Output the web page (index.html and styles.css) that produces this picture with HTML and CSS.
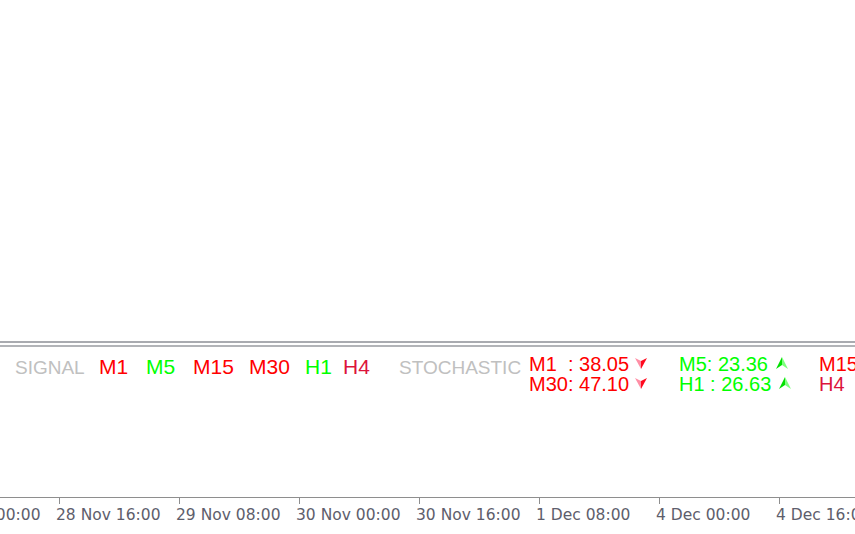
FILE: index.html
```html
<!DOCTYPE html>
<html lang="en">
<head>
  <meta charset="UTF-8">
  <title>Chart - Signal / Stochastic</title>
  <link rel="stylesheet" href="styles.css">
</head>
<body>

  <div class="chart"></div>

  <div class="separator"></div>

  <section class="panel">
    <span class="slot slot-signal label-muted">SIGNAL</span>
    <span class="slot tf slot-m1 red">M1</span>
    <span class="slot tf slot-m5 green">M5</span>
    <span class="slot tf slot-m15 red">M15</span>
    <span class="slot tf slot-m30 red">M30</span>
    <span class="slot tf slot-h1 green">H1</span>
    <span class="slot tf slot-h4 crimson">H4</span>
    <span class="slot slot-stoch label-muted">STOCHASTIC</span>

    <div class="stoch-col stoch-col-1">
      <div class="stoch-line red">M1  : 38.05<svg class="arrow arrow-down" width="12" height="11" viewBox="0 0 12 11"><polygon points="0,0 6,3 6,11" fill="#ff8fa6"/><polygon points="12,0 6,3 6,11" fill="#ff0a1e"/></svg></div>
      <div class="stoch-line red">M30: 47.10<svg class="arrow arrow-down" width="12" height="11" viewBox="0 0 12 11"><polygon points="0,0 6,3 6,11" fill="#ff8fa6"/><polygon points="12,0 6,3 6,11" fill="#ff0a1e"/></svg></div>
    </div>

    <div class="stoch-col stoch-col-2">
      <div class="stoch-line green">M5: 23.36<svg class="arrow arrow-up" width="12" height="12" viewBox="0 0 12 12"><polygon points="6,0 6,8 0,12" fill="#00e000"/><polygon points="6,0 6,8 12,12" fill="#7dff7d"/></svg></div>
      <div class="stoch-line green">H1 : 26.63<svg class="arrow arrow-up" width="12" height="12" viewBox="0 0 12 12"><polygon points="6,0 6,8 0,12" fill="#00e000"/><polygon points="6,0 6,8 12,12" fill="#7dff7d"/></svg></div>
    </div>

    <div class="stoch-col stoch-col-3">
      <div class="stoch-line red">M15: 41.72</div>
      <div class="stoch-line crimson">H4  : 55.08</div>
    </div>
  </section>

  <div class="axis">
    <div class="axis-cell"><span class="tick"></span><span class="axis-label">28 Nov 00:00</span></div>
    <div class="axis-cell"><span class="tick"></span><span class="axis-label">28 Nov 16:00</span></div>
    <div class="axis-cell"><span class="tick"></span><span class="axis-label">29 Nov 08:00</span></div>
    <div class="axis-cell"><span class="tick"></span><span class="axis-label">30 Nov 00:00</span></div>
    <div class="axis-cell"><span class="tick"></span><span class="axis-label">30 Nov 16:00</span></div>
    <div class="axis-cell"><span class="tick"></span><span class="axis-label">1 Dec 08:00</span></div>
    <div class="axis-cell"><span class="tick"></span><span class="axis-label">4 Dec 00:00</span></div>
    <div class="axis-cell"><span class="tick"></span><span class="axis-label">4 Dec 16:00</span></div>
  </div>

</body>
</html>
```

FILE: styles.css
```css
* { margin: 0; padding: 0; box-sizing: border-box; }
html, body { width: 855px; height: 534px; overflow: hidden; }
body { background: #fff; font-family: "Liberation Sans", Arial, sans-serif; }

.chart { height: 341px; }
.separator {
  height: 6px; border-top: 2px solid #a9abb0; border-bottom: 2px solid #b2b4b8;
}

/* indicator window */
.panel {
  height: 150px; display: flex; align-items: flex-start;
  padding: 7px 0 0 15px; white-space: nowrap; overflow: hidden;
  font-size: 19px;
}
.slot { flex: none; margin-top: 4px; line-height: 20px; }
.tf { font-size: 21px; margin-top: 3px; }
.slot-signal { width: 84px; }
.slot-m1, .slot-m5 { width: 47px; }
.slot-m15, .slot-m30 { width: 56px; }
.slot-h1 { width: 38px; }
.slot-h4 { width: 56px; }
.slot-stoch { width: 130px; }

.label-muted { color: #c0c0c0; }
.red { color: #ff0000; }
.green { color: #00ff00; }
.crimson { color: #dc143c; }

.stoch-col { flex: none; font-size: 20px; }
.stoch-col-1 { width: 150px; }
.stoch-col-2 { width: 140px; }
.stoch-line { line-height: 20px; white-space: pre; }
.arrow-down { margin-left: 6px; vertical-align: 2px; }
.arrow-up { margin-left: 8px; vertical-align: 2px; }

/* time axis */
.axis {
  display: flex; margin-left: -64px; border-top: 1px solid #8e8e8e;
  font-family: "DejaVu Sans", sans-serif; font-size: 15.5px; color: #5e5e6c;
}
.axis-cell { flex: none; width: 120px; display: flex; flex-direction: column; }
.tick { width: 1px; height: 6px; margin-left: 3px; background: #8e8e8e; }
.axis-label { margin-top: 2px; line-height: 18px; white-space: nowrap; }
```
